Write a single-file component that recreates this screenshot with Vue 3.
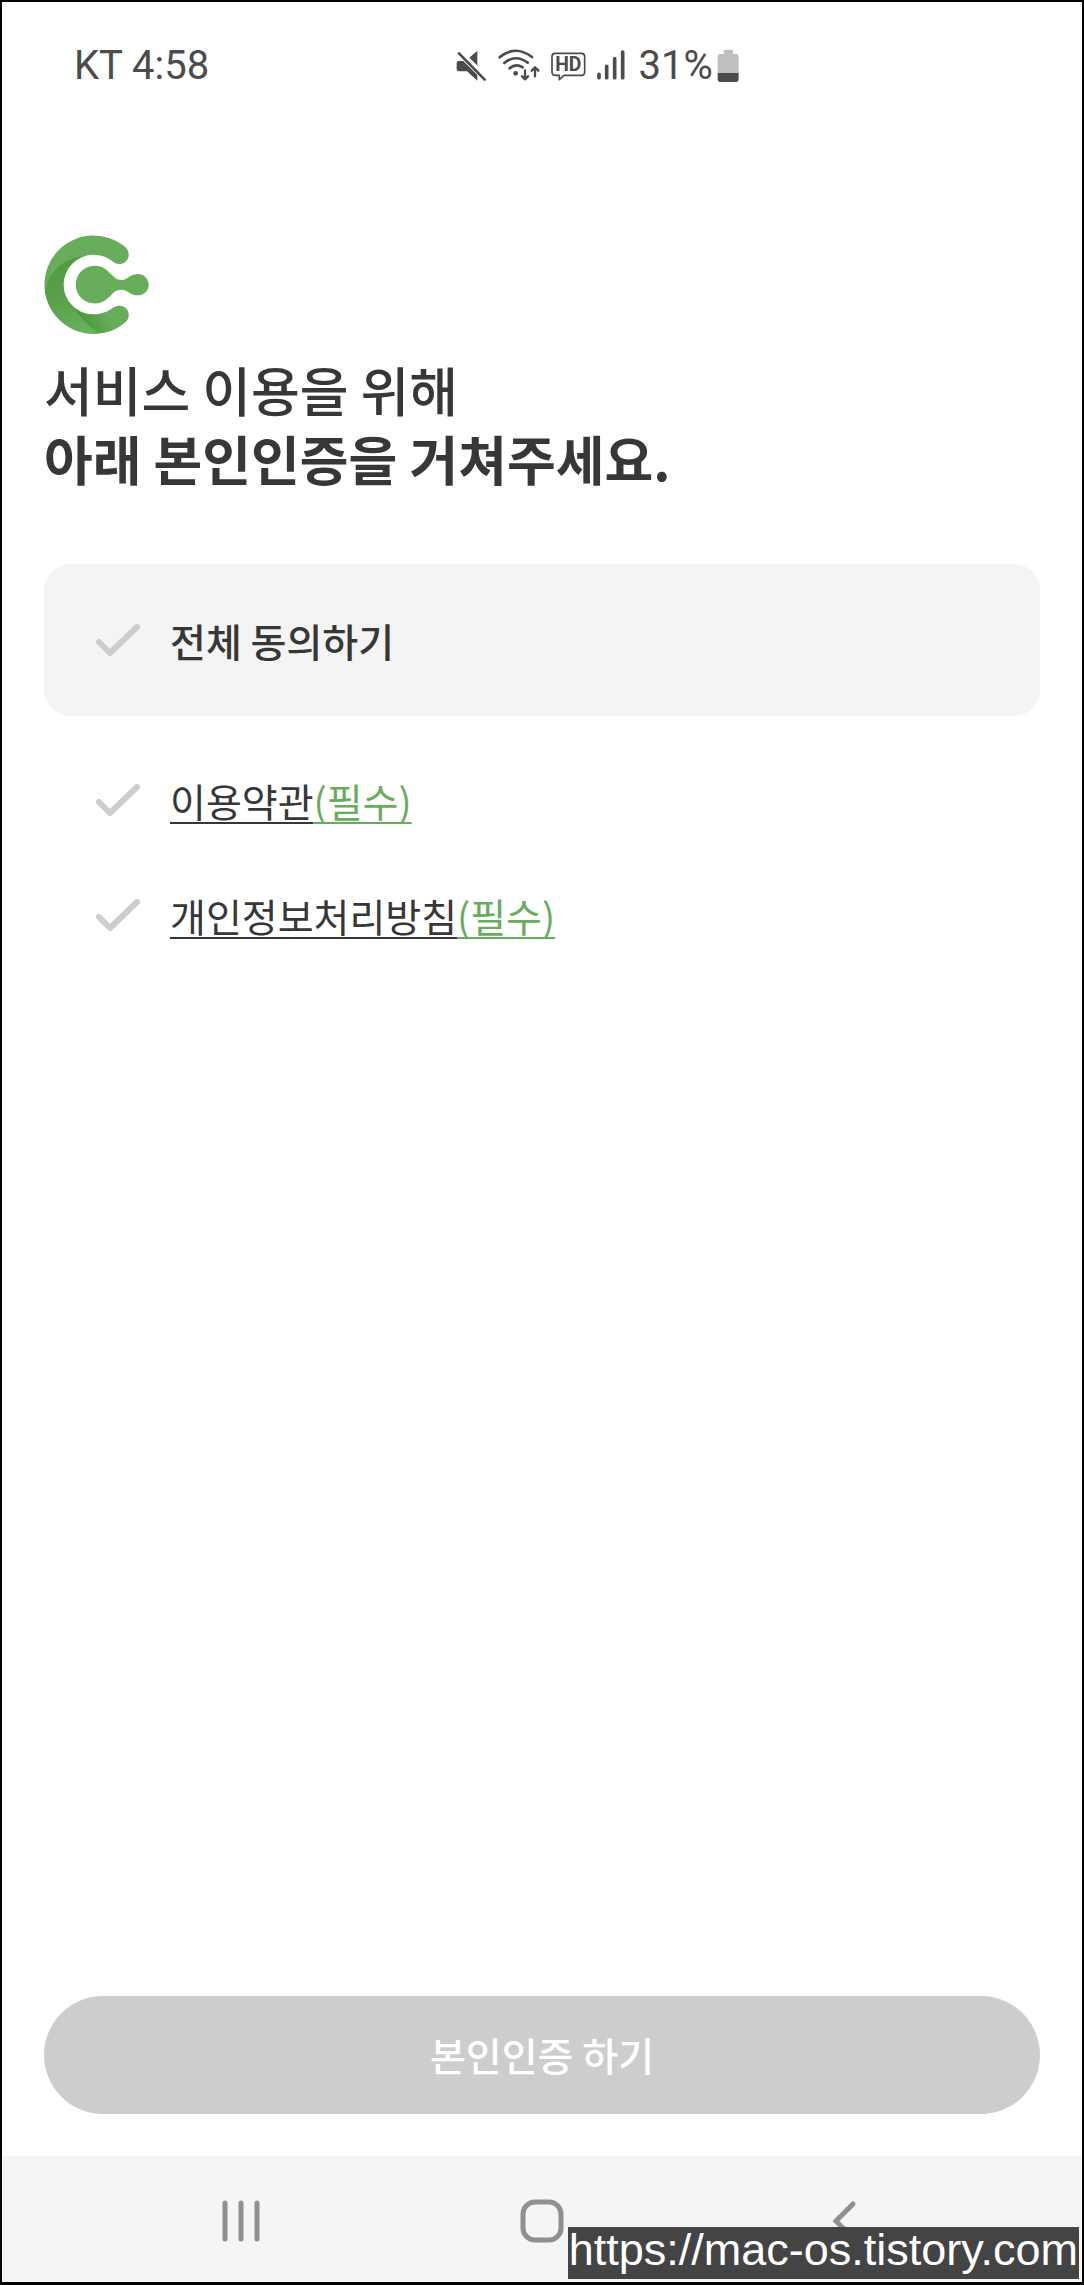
<template>
  <div class="screen">
    <header class="status-bar">
      <div class="status-left">KT 4:58</div>
      <div class="status-right">
        <svg width="31" height="36" viewBox="77 50 93 108" aria-hidden="true">
          <path d="M116 83L141 61V108ZM79 98Q79 92 85 92H99L141 134V151L110 123H85Q79 123 79 117Z" fill="#4b4b4b" />
          <path d="M94 64L172 142" stroke="#fff" stroke-width="7" />
          <path d="M86 69L163 148" stroke="#4b4b4b" stroke-width="8" stroke-linecap="round" />
        </svg>
        <svg width="42" height="36" viewBox="207 50 126 108" aria-hidden="true">
          <g fill="none" stroke="#4b4b4b" stroke-width="8" stroke-linecap="round" stroke-linejoin="round">
            <path d="M212 81Q259 42 309 80M226 98Q260 70 296 97M242 114Q260 98 281 111" />
            <path d="M288 120V147M279 138L288 147L297 138M318 138V111M308 121L318 111L328 121" stroke-width="7" />
          </g>
          <circle cx="260" cy="129" r="7" fill="#4b4b4b" />
        </svg>
        <svg width="35" height="36" viewBox="366 50 105 108" aria-hidden="true">
          <path
            d="M379 69H457Q467 69 467 79V125Q467 135 457 135H405L391 148V135H379Q369 135 369 125V79Q369 69 379 69Z"
            fill="none" stroke="#4b4b4b" stroke-width="5" stroke-linejoin="round"
          />
          <text x="418" y="123" text-anchor="middle" class="hd-text">HD</text>
        </svg>
        <svg width="28" height="36" viewBox="498 50 84 108" aria-hidden="true">
          <path d="M504 132V142M527 108V142M551 85V142M575 65V142" stroke="#4b4b4b" stroke-width="11" stroke-linecap="round" />
        </svg>
        <div class="battery">
          <span>31%</span>
          <svg width="22" height="36" viewBox="859 50 66 108" aria-hidden="true">
            <path d="M861 128V79Q861 71 869 71H879V62Q879 58 883 58H903Q907 58 907 62V71H916Q924 71 924 79V128Z" fill="#bfbfbf" />
            <path d="M861 128H924V145Q924 155 914 155H871Q861 155 861 145Z" fill="#4b4b4b" />
          </svg>
        </div>
      </div>
    </header>

    <main class="content">
      <svg class="logo" viewBox="72 76 316 300" role="img" aria-label="logo">
        <defs>
          <linearGradient id="shade" gradientUnits="userSpaceOnUse" x1="125" y1="170" x2="170" y2="360">
            <stop offset="0" stop-color="#519d43" />
            <stop offset="0.5" stop-color="#58a349" />
            <stop offset="1" stop-color="#69ad5e" />
          </linearGradient>
          <linearGradient id="tail" gradientUnits="userSpaceOnUse" x1="190" y1="335" x2="260" y2="305">
            <stop offset="0" stop-color="#4d993f" />
            <stop offset="1" stop-color="#67ad5b" />
          </linearGradient>
        </defs>
        <path
          d="M318 113A148 148 0 1 0 318 337C330 326 330 306 318 295C308 286 292 286 281 294C262 309 242 315 221 315A90 90 0 0 1 221 135C242 135 262 141 281 157C292 165 308 165 318 155C330 145 330 124 318 113Z"
          fill="#67ad5b"
        />
        <path d="M150 281A90 90 0 0 0 221 315C242 315 262 309 281 294L300 350A148 148 0 0 1 236 372Q185 335 150 281Z" fill="url(#tail)" />
        <path d="M75 241C90 180 135 144 195 139A90 90 0 0 0 148 279Q185 335 236 372A148 148 0 0 1 75 241Z" fill="url(#shade)" />
        <path
          d="M264 184C282 200 285 210 307 211C324 211 329 193 355 193A32 32 0 0 1 355 257C329 257 324 240 307 240C285 240 282 250 264 266A57 57 0 1 1 264 184Z"
          fill="#67ad5b"
        />
      </svg>

      <h1 class="title">
        서비스 이용을 위해<br />
        <strong>아래 본인인증을 거쳐주세요.</strong>
      </h1>

      <div class="agree agree-all">
        <span class="tick">
          <input id="agree-all" v-model="allAgreed" type="checkbox" />
          <svg viewBox="0 0 44 32" aria-hidden="true"><path d="M3 18L14 29L41 3" /></svg>
        </span>
        <label for="agree-all">전체 동의하기</label>
      </div>

      <div class="terms">
        <div v-for="term in terms" :key="term.id" class="agree">
          <span class="tick">
            <input :id="term.id" v-model="term.agreed" type="checkbox" />
            <svg viewBox="0 0 44 32" aria-hidden="true"><path d="M3 18L14 29L41 3" /></svg>
          </span>
          <label :for="term.id">
            <a href="#"><span>{{ term.name }}</span><span class="required">(필수)</span></a>
          </label>
        </div>
      </div>

      <button class="submit" type="button">본인인증 하기</button>
    </main>

    <nav class="nav-bar">
      <button type="button" aria-label="최근 앱">
        <svg width="44" height="44" viewBox="0 0 44 44"><path d="M6 4V40M22 4V40M38 4V40" /></svg>
      </button>
      <button type="button" aria-label="홈">
        <svg width="44" height="44" viewBox="0 0 44 44"><rect x="3" y="3" width="38" height="38" rx="12" /></svg>
      </button>
      <button type="button" aria-label="뒤로">
        <svg width="44" height="44" viewBox="0 0 44 44"><path d="M32 5L15 22L32 39" /></svg>
      </button>
    </nav>

    <div class="watermark">https://mac-os.tistory.com</div>
  </div>
</template>

<script setup>
import { computed, reactive } from 'vue'

const terms = reactive([
  { id: 'term-service', name: '이용약관', agreed: false },
  { id: 'term-privacy', name: '개인정보처리방침', agreed: false }
])

const allAgreed = computed({
  get: () => terms.every((term) => term.agreed),
  set: (value) => terms.forEach((term) => (term.agreed = value))
})
</script>

<style>
body {
  margin: 0;
}
</style>

<style scoped>
.screen {
  position: relative;
  box-sizing: border-box;
  display: flex;
  flex-direction: column;
  min-height: 100vh;
  border: 2px solid #000;
  border-bottom-width: 3px;
  background: #fff;
  color: #373737;
  font-family: "Noto Sans CJK KR", sans-serif;
}

.status-bar {
  display: grid;
  grid-template-columns: 42% 1fr;
  align-items: center;
  height: 126px;
  color: #4b4b4b;
  font-family: Roboto, sans-serif;
  font-size: 40px;
}

.status-left {
  padding-left: 72px;
}

.status-right {
  display: flex;
  align-items: center;
  gap: 11px;
}

.battery {
  display: flex;
  align-items: center;
  gap: 4px;
  padding-left: 3px;
}

.hd-text {
  font-size: 58px;
  font-weight: 700;
  fill: #4b4b4b;
}

.content {
  flex: 1;
  display: flex;
  flex-direction: column;
  padding: 107px 42px 42px;
}

.logo {
  width: 105px;
  height: 100px;
}

.title {
  margin: 20px 0 0;
  font-size: 53px;
  font-weight: 500;
  line-height: 69px;
}

.title strong {
  font-weight: 700;
}

.agree {
  display: flex;
  align-items: center;
  gap: 30px;
  min-height: 115px;
  padding: 0 52px;
  font-size: 39px;
}

.agree-all {
  min-height: 152px;
  margin-top: 71px;
  border-radius: 26px;
  background: #f4f4f4;
  font-weight: 500;
}

.terms {
  margin-top: 26px;
}

.tick {
  display: grid;
  width: 44px;
  height: 32px;
}

.tick input,
.tick svg {
  grid-area: 1 / 1;
  width: 100%;
  height: 100%;
  margin: 0;
}

.tick input {
  appearance: none;
  cursor: pointer;
}

.tick svg {
  pointer-events: none;
  fill: none;
  stroke: #cdcdcd;
  stroke-width: 6;
  stroke-linecap: round;
  stroke-linejoin: round;
}

.tick input:checked + svg {
  stroke: #67ad5b;
}

.agree a {
  color: inherit;
  text-decoration: none;
}

.agree a span {
  text-decoration: underline;
  text-decoration-thickness: 2px;
  text-decoration-skip-ink: none;
  text-underline-offset: 5px;
}

.agree .required {
  color: #67ad5b;
}

.submit {
  height: 118px;
  margin-top: auto;
  padding: 0 0 2px;
  border: none;
  border-radius: 59px;
  background: #cdcdcd;
  color: #fff;
  font-family: inherit;
  font-size: 39px;
  font-weight: 500;
  cursor: pointer;
}

.nav-bar {
  box-sizing: border-box;
  display: grid;
  grid-template-columns: repeat(3, 1fr);
  height: 126px;
  padding: 4px 88px 0;
  background: #f5f5f5;
}

.nav-bar button {
  display: flex;
  align-items: center;
  justify-content: center;
  padding: 0;
  border: none;
  background: none;
  cursor: pointer;
}

.nav-bar svg {
  fill: none;
  stroke: #909090;
  stroke-width: 5;
  stroke-linecap: round;
}

.watermark {
  position: absolute;
  right: 3px;
  bottom: 3px;
  padding: 0 1px 6px;
  background: #444;
  color: #fff;
  font-family: "Liberation Sans", Arial, sans-serif;
  font-size: 45px;
  line-height: 46px;
}
</style>
